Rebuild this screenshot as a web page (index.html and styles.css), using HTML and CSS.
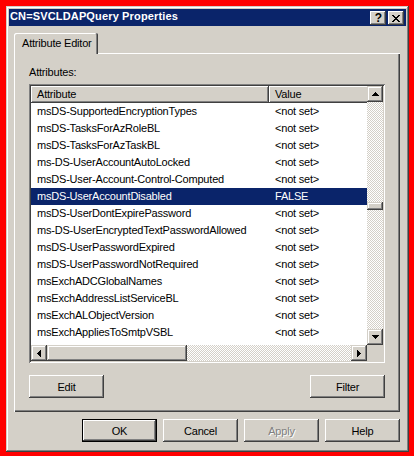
FILE: index.html
```html
<!DOCTYPE html>
<html>
<head>
<meta charset="utf-8">
<title>CN=SVCLDAPQuery Properties</title>
<link rel="stylesheet" href="styles.css">
</head>
<body>
<div class="window">
  <div class="titlebar">
    <span class="title">CN=SVCLDAPQuery Properties</span>
    <div class="caption-btns">
      <span class="cbtn help">?</span>
      <span class="cbtn close"><svg width="8" height="7" viewBox="0 0 8 7" shape-rendering="crispEdges"><path d="M0 0h2v1H0zM6 0h2v1H6zM1 1h2v1H1zM5 1h2v1H5zM2 2h4v1H2zM3 3h2v1H3zM2 4h4v1H2zM1 5h2v1H1zM5 5h2v1H5zM0 6h2v1H0zM6 6h2v1H6z" fill="#000"/></svg></span>
    </div>
  </div>
  <div class="client">
    <div class="tabstrip">
      <div class="tab">Attribute Editor</div>
      <div class="tabfill"></div>
    </div>
    <div class="panel">
      <div class="label">Attributes:</div>
      <div class="listbox">
        <div class="listview">
          <div class="lv-header">
            <div class="hcell">Attribute</div>
            <div class="hcell">Value</div>
          </div>
          <div class="lv-row"><span class="c1">msDS-SupportedEncryptionTypes</span><span class="c2">&lt;not set&gt;</span></div>
          <div class="lv-row"><span class="c1">msDS-TasksForAzRoleBL</span><span class="c2">&lt;not set&gt;</span></div>
          <div class="lv-row"><span class="c1">msDS-TasksForAzTaskBL</span><span class="c2">&lt;not set&gt;</span></div>
          <div class="lv-row"><span class="c1">ms-DS-UserAccountAutoLocked</span><span class="c2">&lt;not set&gt;</span></div>
          <div class="lv-row"><span class="c1">msDS-User-Account-Control-Computed</span><span class="c2">&lt;not set&gt;</span></div>
          <div class="lv-row selected"><span class="c1">msDS-UserAccountDisabled</span><span class="c2">FALSE</span></div>
          <div class="lv-row"><span class="c1">msDS-UserDontExpirePassword</span><span class="c2">&lt;not set&gt;</span></div>
          <div class="lv-row"><span class="c1">ms-DS-UserEncryptedTextPasswordAllowed</span><span class="c2">&lt;not set&gt;</span></div>
          <div class="lv-row"><span class="c1">msDS-UserPasswordExpired</span><span class="c2">&lt;not set&gt;</span></div>
          <div class="lv-row"><span class="c1">msDS-UserPasswordNotRequired</span><span class="c2">&lt;not set&gt;</span></div>
          <div class="lv-row"><span class="c1">msExchADCGlobalNames</span><span class="c2">&lt;not set&gt;</span></div>
          <div class="lv-row"><span class="c1">msExchAddressListServiceBL</span><span class="c2">&lt;not set&gt;</span></div>
          <div class="lv-row"><span class="c1">msExchALObjectVersion</span><span class="c2">&lt;not set&gt;</span></div>
          <div class="lv-row"><span class="c1">msExchAppliesToSmtpVSBL</span><span class="c2">&lt;not set&gt;</span></div>
          <div class="lv-row"><span class="c1">msExchAssistantName</span><span class="c2">&lt;not set&gt;</span></div>
        </div>
        <div class="vscroll">
          <div class="sbtn"><svg width="7" height="4" viewBox="0 0 7 4" shape-rendering="crispEdges"><path d="M3 0h1v1H3zM2 1h3v1H2zM1 2h5v1H1zM0 3h7v1H0z" fill="#000"/></svg></div>
          <div class="track"><div class="thumb vthumb"></div></div>
          <div class="sbtn"><svg width="7" height="4" viewBox="0 0 7 4" shape-rendering="crispEdges"><path d="M0 0h7v1H0zM1 1h5v1H1zM2 2h3v1H2zM3 3h1v1H3z" fill="#000"/></svg></div>
        </div>
        <div class="hscroll">
          <div class="sbtn"><svg width="4" height="7" viewBox="0 0 4 7" shape-rendering="crispEdges"><path d="M3 0h1v7H3zM2 1h1v5H2zM1 2h1v3H1zM0 3h1v1H0z" fill="#000"/></svg></div>
          <div class="track htrack"><div class="thumb hthumb"></div></div>
          <div class="sbtn"><svg width="4" height="7" viewBox="0 0 4 7" shape-rendering="crispEdges"><path d="M0 0h1v7H0zM1 1h1v5H1zM2 2h1v3H2zM3 3h1v1H3z" fill="#000"/></svg></div>
        </div>
        <div class="corner"></div>
      </div>
      <div class="panel-btns">
        <button class="btn">Edit</button>
        <button class="btn">Filter</button>
      </div>
    </div>
    <div class="dlg-btns">
      <button class="btn default">OK</button>
      <button class="btn">Cancel</button>
      <button class="btn disabled">Apply</button>
      <button class="btn">Help</button>
    </div>
  </div>
</div>
</body>
</html>
```

FILE: styles.css
```css
* { box-sizing: border-box; }
html, body { margin: 0; padding: 0; }
body {
  background: #ff0000;
  width: 414px;
  height: 456px;
  padding: 6px 5px 4px 6px;
  font-family: "Liberation Sans", Arial, sans-serif;
  font-size: 11px;
  letter-spacing: -0.2px;
  color: #000;
  overflow: hidden;
}
.window {
  width: 403px;
  height: 446px;
  background: #d4d0c8;
  padding: 3px;
  display: flex;
  flex-direction: column;
  box-shadow: inset -1px -1px #404040, inset 1px 1px #d4d0c8, inset -2px -2px #808080, inset 2px 2px #ffffff;
}
.titlebar {
  height: 17px;
  flex: none;
  background: #0a246a;
  color: #fff;
  display: flex;
  justify-content: space-between;
  align-items: flex-start;
  padding: 0 2px 0 1px;
}
.title {
  font-weight: bold;
  letter-spacing: 0.15px;
  line-height: 13px;
  padding-top: 1px;
  white-space: nowrap;
}
.caption-btns {
  display: flex;
  gap: 2px;
  padding-top: 2px;
}
.cbtn {
  width: 16px;
  height: 14px;
  background: #d4d0c8;
  color: #000;
  display: flex;
  align-items: center;
  justify-content: center;
  box-shadow: inset -1px -1px #404040, inset 1px 1px #ffffff, inset -2px -2px #808080;
}
.cbtn.help {
  font-weight: bold;
  font-size: 12px;
  line-height: 14px;
  letter-spacing: 0;
  padding-left: 1px;
}
.client {
  flex: 1;
  display: flex;
  flex-direction: column;
  padding: 7px 6px 0 5px;
}
.tabstrip {
  display: flex;
  height: 21px;
  flex: none;
}
.tab {
  width: 84px;
  height: 21px;
  padding: 4px 0 0 8px;
  line-height: 13px;
  white-space: nowrap;
  border-radius: 2px 2px 0 0;
  box-shadow: inset -1px 0 #404040, inset 1px 1px #ffffff, inset -2px 0 #808080;
}
.tabfill {
  flex: 1;
  border-bottom: 1px solid #ffffff;
}
.panel {
  width: 386px;
  height: 358px;
  flex: none;
  padding: 12px 15px 14px 15px;
  display: flex;
  flex-direction: column;
  box-shadow: inset 1px 0 #ffffff, inset -1px -1px #404040, inset -2px -2px #808080;
}
.label {
  line-height: 13px;
  margin-bottom: 5px;
}
.listbox {
  width: 356px;
  height: 279px;
  padding: 2px;
  display: grid;
  grid-template-columns: 336px 16px;
  grid-template-rows: 259px 16px;
  box-shadow: inset 1px 1px #808080, inset -1px -1px #ffffff, inset 2px 2px #404040, inset -2px -2px #d4d0c8;
}
.listview {
  background: #fff;
  overflow: hidden;
  white-space: nowrap;
}
.lv-header {
  display: grid;
  grid-template-columns: 238px 300px;
  height: 17px;
}
.hcell {
  background: #d4d0c8;
  padding-left: 6px;
  line-height: 17px;
  box-shadow: inset -1px -1px #404040, inset 1px 1px #ffffff, inset -2px -2px #808080;
}
.lv-row {
  display: grid;
  grid-template-columns: 238px 300px;
  height: 17px;
  line-height: 17px;
}
.lv-row span { padding-left: 6px; }
.lv-row.selected {
  background: #0a246a;
  color: #fff;
}
.vscroll {
  display: flex;
  flex-direction: column;
}
.hscroll {
  display: flex;
}
.sbtn {
  width: 16px;
  height: 16px;
  flex: none;
  background: #d4d0c8;
  display: flex;
  align-items: center;
  justify-content: center;
  box-shadow: inset -1px -1px #404040, inset 1px 1px #d4d0c8, inset -2px -2px #808080, inset 2px 2px #ffffff;
}
.track {
  flex: 1;
  background: repeating-conic-gradient(#d4d0c8 0 25%, #ffffff 0 50%) 0 0 / 2px 2px;
}
.thumb {
  background: #d4d0c8;
  box-shadow: inset -1px -1px #404040, inset 1px 1px #d4d0c8, inset -2px -2px #808080, inset 2px 2px #ffffff;
}
.vthumb {
  height: 8px;
  margin-top: 100px;
}
.htrack { display: flex; }
.hthumb {
  width: 140px;
  height: 16px;
}
.corner { background: #d4d0c8; }
.panel-btns {
  display: flex;
  justify-content: space-between;
  margin-top: 12px;
}
.btn {
  width: 75px;
  height: 23px;
  border: 0;
  padding: 0;
  margin: 0;
  background: #d4d0c8;
  font: inherit;
  letter-spacing: inherit;
  color: #000;
  display: flex;
  align-items: center;
  justify-content: center;
  box-shadow: inset -1px -1px #404040, inset 1px 1px #ffffff, inset -2px -2px #808080;
}
.btn.default {
  border: 1px solid #000;
}
.btn.disabled {
  color: #808080;
  text-shadow: 1px 1px #ffffff;
}
.dlg-btns {
  display: flex;
  justify-content: flex-end;
  gap: 6px;
  margin-top: 7px;
}
```
